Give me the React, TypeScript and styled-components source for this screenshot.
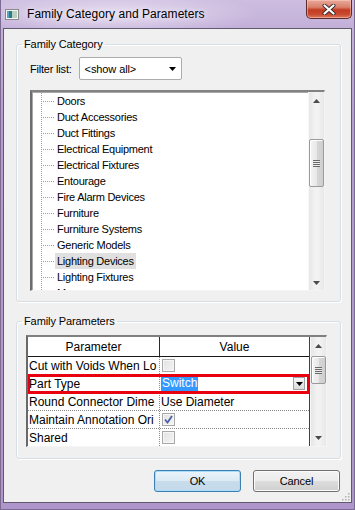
import React from "react";
import styled, { createGlobalStyle, css } from "styled-components";

const GlobalStyle = createGlobalStyle`
  html, body { margin: 0; padding: 0; }
  body {
    width: 355px;
    height: 510px;
    overflow: hidden;
    background: #b8a2d0;
    font-family: "Liberation Sans", Arial, sans-serif;
  }
  * { box-sizing: border-box; }
`;

const Window = styled.div`
  width: 355px;
  height: 510px;
  display: flex;
  flex-direction: column;
  background:
    radial-gradient(ellipse 150px 22px at 110px 14px, rgba(236, 228, 244, 0.85), rgba(236, 228, 244, 0) 100%),
    linear-gradient(to bottom, #cdbde0 0px, #c3b0d9 28px, #b59dd0 120px, #ae95cb 510px);
  border-left: 1px solid #7d6a92;
  border-right: 1px solid #7d6a92;
  border-bottom: 1px solid #7d6a92;
`;

const TitleBar = styled.div`
  height: 28px;
  flex: none;
  display: flex;
  align-items: center;
  padding-left: 4px;
`;

const TitleText = styled.span`
  margin-left: 8px;
  font-size: 12px;
  color: #000;
  text-shadow: 0 0 6px rgba(255, 255, 255, 0.9);
  letter-spacing: 0.05px;
`;

const CloseButton = styled.div`
  align-self: flex-start;
  margin-left: auto;
  margin-right: 2px;
  width: 46px;
  height: 19px;
  border: 1px solid #5b2a2a;
  border-top: none;
  border-radius: 0 0 5px 5px;
  background: linear-gradient(to bottom, #e9a99b 0%, #d9806c 40%, #c23c22 55%, #c94a30 80%, #dc7a5e 100%);
  box-shadow: inset 0 0 0 1px rgba(255, 210, 200, 0.5);
  display: flex;
  align-items: center;
  justify-content: center;
`;

const Client = styled.div`
  flex: 1;
  margin: 0 2px 6px 2px;
  border: 1px solid #5f5a6e;
  background: #f0f0f0;
  display: flex;
  flex-direction: column;
  position: relative;
  font-size: 11px;
  color: #000;
`;

const GroupBox = styled.fieldset<{ $top: number; $pad: string }>`
  margin: ${(p) => p.$top}px 10px 0 12px;
  padding: ${(p) => p.$pad};
  border: 1px solid #d5dfe5;
  border-radius: 3px;
  box-shadow: inset 1px 1px 0 #fff, 1px 1px 0 #fff;
  min-width: 0;
`;

const Legend = styled.legend<{ $shift: number }>`
  padding: 0 2px;
  margin-left: ${(p) => p.$shift}px;
  font-size: 11px;
  line-height: 14px;
  letter-spacing: -0.1px;
  color: #000;
`;

const FilterRow = styled.div`
  display: flex;
  align-items: center;
  height: 23px;
  gap: 7px;
`;

const Label = styled.span`
  font-size: 11px;
  letter-spacing: -0.2px;
`;

const Combo = styled.div`
  width: 103px;
  height: 23px;
  border: 1px solid #acacac;
  border-radius: 2px;
  background: #fff;
  display: flex;
  align-items: center;
  padding-left: 5px;
  padding-right: 5px;
  font-size: 11px;
  letter-spacing: -0.1px;
`;

const ComboText = styled.span`
  flex: 1;
`;

const Sunken = styled.div<{ $h: number; $mt?: number }>`
  height: ${(p) => p.$h}px;
  margin-top: ${(p) => p.$mt ?? 0}px;
  border-style: solid;
  border-width: 2px 1px 1px 2px;
  border-color: #828282 #f4f4f4 #f4f4f4 #6d6d6d;
  box-shadow: inset 1px 1px 0 #a8a8a8;
  background: #fff;
  display: flex;
  overflow: hidden;
`;

const TreeArea = styled.div`
  flex: 1;
  overflow: hidden;
  padding-top: 1px;
`;

const TreeRow = styled.div`
  height: 16px;
  display: flex;
  align-items: center;
`;

const Branch = styled.span`
  flex: none;
  width: 14px;
  height: 16px;
  margin-left: 9px;
  background-image:
    repeating-linear-gradient(to bottom, #a0a0a0 0 1px, transparent 1px 2px),
    repeating-linear-gradient(to right, #a0a0a0 0 1px, transparent 1px 2px);
  background-size: 1px 100%, 13px 1px;
  background-position: 0 0, 2px 8px;
  background-repeat: no-repeat;
`;

const TreeLabel = styled.span<{ $selected?: boolean }>`
  padding: 0 2px;
  height: 16px;
  line-height: 16px;
  font-size: 11px;
  letter-spacing: -0.25px;
  white-space: nowrap;
  ${(p) =>
    p.$selected &&
    css`
      background: #e0e0e0;
    `}
`;

const ScrollBar = styled.div`
  width: 16px;
  flex: none;
  background: linear-gradient(to right, #e6e6e6, #f2f2f2 40%, #f2f2f2 60%, #e8e8e8);
  border-left: 1px solid #f8f8f8;
  display: flex;
  flex-direction: column;
`;

const ArrowBtn = styled.div`
  height: 17px;
  flex: none;
  display: flex;
  align-items: center;
  justify-content: center;
`;

const ScrollSpacer = styled.div<{ $h: number }>`
  height: ${(p) => p.$h}px;
  flex: none;
`;

const Thumb = styled.div<{ $h: number }>`
  height: ${(p) => p.$h}px;
  flex: none;
  border: 1px solid #9a9a9a;
  border-radius: 2px;
  background: linear-gradient(to right, #f4f4f4, #e8e8e8 50%, #d6d6d6 51%, #cfcfcf);
  box-shadow: inset 1px 1px 0 #fff;
  display: flex;
  align-items: center;
  justify-content: center;
`;

const Grip = styled.div`
  width: 7px;
  height: 7px;
  background: repeating-linear-gradient(to bottom, #6a6a6a 0 1px, #eaeaea 1px 2px);
`;

const Grid = styled.div`
  height: 112px;
  border-style: solid;
  border-width: 2px 1px 1px 2px;
  border-color: #808080 #f4f4f4 #f4f4f4 #696969;
  background: #fff;
  display: flex;
  overflow: hidden;
`;

const Table = styled.div`
  flex: 1;
  display: flex;
  flex-direction: column;
  min-width: 0;
  border-right: 1px solid #404040;
`;

const HeaderRow = styled.div`
  height: 20px;
  flex: none;
  display: grid;
  grid-template-columns: 132px 1fr;
  border-bottom: 1px solid #1a1a1a;
  background: #fff;
`;

const HeaderCell = styled.div<{ $last?: boolean }>`
  display: flex;
  align-items: center;
  justify-content: center;
  font-size: 12px;
  color: #000;
  ${(p) => !p.$last && css`border-right: 1px solid #2a2a2a;`}
`;

const DataRow = styled.div<{ $marked?: boolean }>`
  height: 18px;
  flex: none;
  display: grid;
  grid-template-columns: 132px 1fr;
  border-bottom: 1px dotted #8a8a8a;
  ${(p) =>
    p.$marked &&
    css`
      outline: 3px solid #e8000e;
      outline-offset: -2px;
      position: relative;
      z-index: 1;
    `}
`;

const Cell = styled.div<{ $first?: boolean }>`
  display: flex;
  align-items: center;
  padding-left: 1px;
  overflow: hidden;
  white-space: nowrap;
  font-size: 12px;
  ${(p) => p.$first && css`border-right: 1px dotted #8a8a8a;`}
`;

const Selected = styled.span`
  background: #3399ff;
  color: #fff;
  padding: 0 1px;
  line-height: 15px;
`;

const DropBtn = styled.div`
  margin-left: auto;
  margin-right: 4px;
  width: 12px;
  height: 13px;
  border: 1px solid #a0a0a0;
  background: linear-gradient(#f6f6f6, #dcdcdc);
  display: flex;
  align-items: center;
  justify-content: center;
`;

const CheckBox = styled.div`
  width: 13px;
  height: 13px;
  margin-left: 1px;
  border: 1px solid #a8a8a8;
  background: linear-gradient(135deg, #e2e2e2, #f4f4f4);
  box-shadow: inset 0 0 0 1px #f6f6f6;
  display: flex;
  align-items: center;
  justify-content: center;
`;

const ButtonRow = styled.div`
  display: flex;
  justify-content: flex-end;
  gap: 12px;
  margin: 11px 11px 0 0;
`;

const Button = styled.div<{ $default?: boolean }>`
  width: 87px;
  height: 22px;
  border-radius: 3px;
  display: flex;
  align-items: center;
  justify-content: center;
  font-size: 11px;
  letter-spacing: -0.1px;
  color: #000;
  ${(p) =>
    p.$default
      ? css`
          border: 1px solid #3c7fb1;
          background: linear-gradient(to bottom, #eaf4fb 0%, #dceaf4 50%, #c8dceb 51%, #c4d9ea 100%);
          box-shadow: inset 0 0 0 1px #a8dcf8;
        `
      : css`
          border: 1px solid #707070;
          background: linear-gradient(to bottom, #f2f2f2 0%, #ebebeb 50%, #dddddd 51%, #cfcfcf 100%);
          box-shadow: inset 0 0 0 1px #fbfbfb;
        `}
`;

const SizeGrip = styled.svg`
  position: absolute;
  right: 1px;
  bottom: 1px;
`;

const treeItems = [
  "Doors",
  "Duct Accessories",
  "Duct Fittings",
  "Electrical Equipment",
  "Electrical Fixtures",
  "Entourage",
  "Fire Alarm Devices",
  "Furniture",
  "Furniture Systems",
  "Generic Models",
  "Lighting Devices",
  "Lighting Fixtures",
  "Mass",
];

const Up = () => (
  <svg width="7" height="4" viewBox="0 0 7 4">
    <path d="M0 4 L3.5 0 L7 4 Z" fill="#4a4a4a" />
  </svg>
);
const Down = ({ color = "#4a4a4a" }: { color?: string }) => (
  <svg width="7" height="4" viewBox="0 0 7 4">
    <path d="M0 0 L7 0 L3.5 4 Z" fill={color} />
  </svg>
);

const Check = () => (
  <svg width="9" height="9" viewBox="0 0 9 9">
    <path d="M1 4.5 L3.5 7.5 L8 1" stroke="#4a5fa8" strokeWidth="1.8" fill="none" />
  </svg>
);

export default function App() {
  return (
    <>
      <GlobalStyle />
      <Window>
        <TitleBar>
          <svg width="14" height="11" viewBox="0 0 14 11">
            <rect x="0.5" y="0.5" width="13" height="10" fill="#f4f4f4" stroke="#8a8a8a" />
            <rect x="2" y="2" width="5" height="7" fill="#2e7f7a" />
            <rect x="7" y="2" width="5" height="7" fill="#b9cfc4" />
            <rect x="2" y="2" width="2" height="7" fill="#5aa3c8" />
          </svg>
          <TitleText>Family Category and Parameters</TitleText>
          <CloseButton>
            <svg width="14" height="11" viewBox="0 0 14 11">
              <path d="M2.5 1.5 L11.5 9.5 M11.5 1.5 L2.5 9.5" stroke="#3a2a2a" strokeWidth="4" strokeLinecap="round" />
              <path d="M2.5 1.5 L11.5 9.5 M11.5 1.5 L2.5 9.5" stroke="#ffffff" strokeWidth="2.2" strokeLinecap="round" />
            </svg>
          </CloseButton>
        </TitleBar>
        <Client>
          <GroupBox $top={8} $pad="6px 15px 10px 13px">
            <Legend $shift={-8}>Family Category</Legend>
            <FilterRow>
              <Label>Filter list:</Label>
              <Combo>
                <ComboText>&lt;show all&gt;</ComboText>
                <Down color="#000" />
              </Combo>
            </FilterRow>
            <Sunken $h={201} $mt={10}>
              <TreeArea>
                {treeItems.map((t) => (
                  <TreeRow key={t}>
                    <Branch />
                    <TreeLabel $selected={t === "Lighting Devices"}>{t}</TreeLabel>
                  </TreeRow>
                ))}
              </TreeArea>
              <ScrollBar>
                <ArrowBtn>
                  <Up />
                </ArrowBtn>
                <ScrollSpacer $h={30} />
                <Thumb $h={48}>
                  <Grip />
                </Thumb>
                <ScrollSpacer $h={87} />
                <ArrowBtn>
                  <Down />
                </ArrowBtn>
              </ScrollBar>
            </Sunken>
          </GroupBox>
          <GroupBox $top={12} $pad="7px 13px 11px 9px">
            <Legend $shift={-4}>Family Parameters</Legend>
            <Grid>
              <Table>
                <HeaderRow>
                  <HeaderCell>Parameter</HeaderCell>
                  <HeaderCell $last>Value</HeaderCell>
                </HeaderRow>
                <DataRow>
                  <Cell $first>Cut with Voids When Lo</Cell>
                  <Cell>
                    <CheckBox />
                  </Cell>
                </DataRow>
                <DataRow $marked>
                  <Cell $first>Part Type</Cell>
                  <Cell>
                    <Selected>Switch</Selected>
                    <DropBtn>
                      <Down color="#000" />
                    </DropBtn>
                  </Cell>
                </DataRow>
                <DataRow>
                  <Cell $first>Round Connector Dime</Cell>
                  <Cell>Use Diameter</Cell>
                </DataRow>
                <DataRow>
                  <Cell $first>Maintain Annotation Ori</Cell>
                  <Cell>
                    <CheckBox>
                      <Check />
                    </CheckBox>
                  </Cell>
                </DataRow>
                <DataRow>
                  <Cell $first>Shared</Cell>
                  <Cell>
                    <CheckBox />
                  </Cell>
                </DataRow>
              </Table>
              <ScrollBar>
                <ArrowBtn>
                  <Up />
                </ArrowBtn>
                <ScrollSpacer $h={2} />
                <Thumb $h={28}>
                  <Grip />
                </Thumb>
                <ScrollSpacer $h={45} />
                <ArrowBtn>
                  <Down />
                </ArrowBtn>
              </ScrollBar>
            </Grid>
          </GroupBox>
          <ButtonRow>
            <Button $default>OK</Button>
            <Button>Cancel</Button>
          </ButtonRow>
          <SizeGrip width="10" height="10" viewBox="0 0 10 10">
            {[
              [8, 2],
              [8, 5],
              [5, 5],
              [8, 8],
              [5, 8],
              [2, 8],
            ].map(([x, y]) => (
              <rect key={`${x}-${y}`} x={x} y={y} width="1.5" height="1.5" fill="#b0b0b0" />
            ))}
          </SizeGrip>
        </Client>
      </Window>
    </>
  );
}
